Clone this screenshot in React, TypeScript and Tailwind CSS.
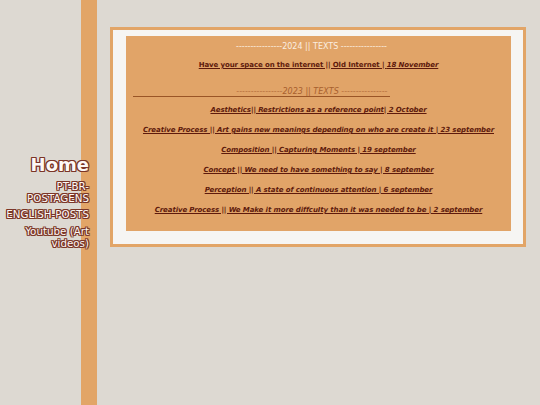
import React from "react";

const outline =
  "[text-shadow:1px_0_0_#7a3526,-1px_0_0_#7a3526,0_1px_0_#7a3526,0_-1px_0_#7a3526,1px_1px_0_#7a3526,-1px_-1px_0_#7a3526,1px_-1px_0_#7a3526,-1px_1px_0_#7a3526]";

const posts: string[] = [
  "Aesthetics|| Restrictions as a reference point| 2 October",
  "Creative Process || Art gains new meanings depending on who are create it | 23 september",
  "Composition || Capturing Moments | 19 september",
  "Concept || We need to have something to say | 8 september",
  "Perception || A state of continuous attention | 6 september",
  "Creative Process || We Make it more diffcuIty than it was needed to be | 2 september",
];

export default function App() {
  return (
    <div
      className="flex h-[405px] w-[540px] overflow-hidden bg-[#ddd9d2]"
      style={{ fontFamily: '"DejaVu Sans", sans-serif' }}
    >
      <div className="flex h-full w-[97px] shrink-0 border-r-[16px] border-[#e2a567]">
        <nav className="mr-[-8px] flex w-[97px] flex-col items-end justify-center pb-[3px] text-right text-[#fdf8f6]">
          <div className={`text-[18px] font-bold leading-[22px] ${outline}`}>Home</div>
          <div className={`mt-[4px] w-[70px] text-[10.3px] leading-[12px] ${outline}`}>PT-BR-POSTAGENS</div>
          <div className={`mt-[4px] text-[10.3px] leading-[12px] ${outline}`}>ENGLISH-POSTS</div>
          <div className={`mt-[5px] w-[70px] text-[10.3px] leading-[12px] ${outline}`}>Youtube (Art videos)</div>
        </nav>
      </div>
      <div className="pl-[13px] pt-[27px]">
        <div className="w-[416px] border-[3px] border-[#e2a567] bg-[#f6f5f3] pb-[13px] pl-[13px] pr-[12px] pt-[6px]">
          <div className="bg-[#e1a468] pb-[16px] pt-[6px] text-[7px] leading-[10px] tracking-[-0.1px]">
            <p className="pr-[14px] text-center text-[8px] tracking-normal text-[#fbeee0]">----------------2024 || TEXTS ----------------</p>
            <p className="mt-[8px] text-center font-bold text-[#5e1a0c] underline">
              Have your space on the internet || Old Internet | <i>18 November</i>
            </p>
            <div className="mb-[2px] ml-[7px] mt-[17px] w-[257px] border-b border-[#9a5526] text-right text-[8px] leading-[9px] italic tracking-normal text-[#a8602e]">
              ----------------2023 || TEXTS ----------------&nbsp;
            </div>
            {posts.map((p, i) => (
              <p
                key={i}
                className={`${i === 0 ? "mt-[8px]" : "mt-[10px]"} text-center font-bold italic text-[#5e1a0c] underline`}
              >
                {p}
              </p>
            ))}
          </div>
        </div>
      </div>
    </div>
  );
}
